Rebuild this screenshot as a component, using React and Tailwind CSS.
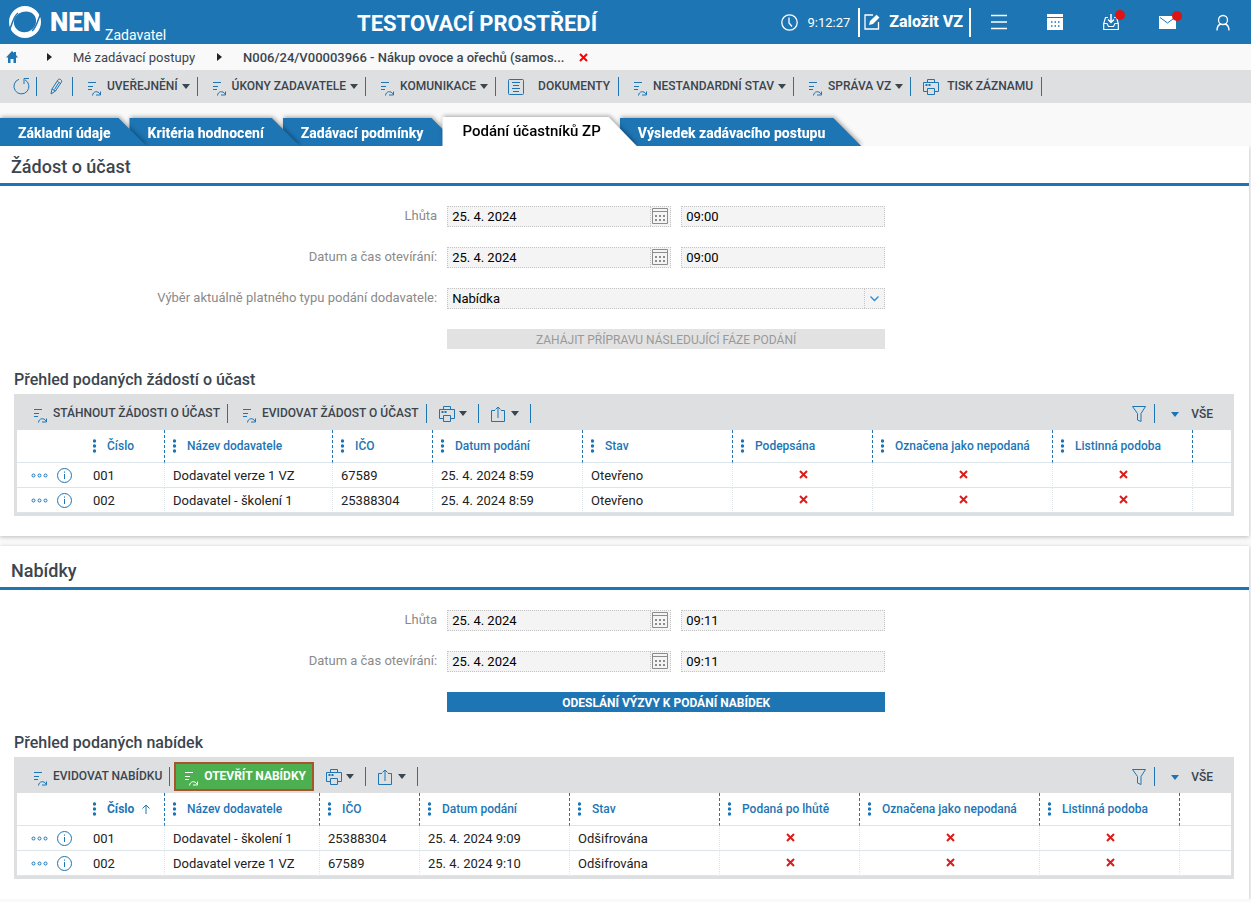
import React from 'react';

const CARET = 'M0 0h8L4 5z';

/* Icons */
const Caret = ({ className = 'fill-[#3b454e]' }) => (
  <svg width="8" height="5" viewBox="0 0 8 5" className={className}>
    <path d={CARET} />
  </svg>
);

const ActionIcon = ({ className = 'stroke-[#1d75b4]' }) => (
  <svg width="14" height="14" viewBox="0 0 14 14" fill="none" className={`mt-1 shrink-0 ${className}`}>
    <path d="M1 .5h8M1 4.500h5M1 7.500h4" />
    <path d="M5.500 13.500c.5-4.500 5.500-5 7.500-1.500M13.500 9.500v3.500H9" />
  </svg>
);

const RefreshIcon = () => (
  <svg width="17" height="17" viewBox="0 0 17 17" fill="none" className="stroke-[#1d75b4]">
    <path d="M6 1.300A7.500 7.500 0 1 0 12 1.800M11 6V.500H16" />
  </svg>
);

const PencilIcon = () => (
  <svg width="13" height="17" viewBox="0 0 13 17" fill="none" className="stroke-[#1d75b4]">
    <path d="M1 16l1-5L8 1.800c1-1.500 4.500 0 3.500 2.200L5.500 13zM2 11l3.500 2M7.500 3.500l3.200 2M8.500 5L4.500 11.500" />
  </svg>
);

const ListIcon = () => (
  <svg width="16" height="16" viewBox="0 0 16 16" fill="none" className="stroke-[#1d75b4]">
    <rect x=".5" y=".5" width="15" height="15" rx="1" />
    <path d="M4 3.500h8M5 6.500h6M4 9.500h8M5 12.500h6" />
  </svg>
);

const PrinterIcon = () => (
  <svg width="16" height="16" viewBox="0 0 16 16" fill="none" className="stroke-[#1d75b4]">
    <path d="M4.500 3.500v-3h7v3M4.500 12.500H.5v-9h15v9h-4" />
    <path d="M4.500 9.500h7v6h-7z" />
    <path d="M2.500 6h2M5.500 6h2" strokeWidth="2" />
  </svg>
);

const ShareIcon = () => (
  <svg width="14" height="16" viewBox="0 0 14 16" fill="none" className="stroke-[#1d75b4]">
    <path d="M4 4.500H.5v11h13v-11H10M7 12V1M4.500 3.500L7 1l2.500 2.500" />
  </svg>
);

const FilterIcon = () => (
  <svg width="14" height="16" viewBox="0 0 14 16" fill="none" className="stroke-[#1d75b4]">
    <path d="M.5.5h13L9 7.500v8L5.500 14V7.500z" />
  </svg>
);

const FieldCalendarIcon = () => (
  <svg width="16" height="16" viewBox="0 0 16 16" fill="none" className="stroke-[#8c8c8c]">
    <path d="M.5.5h15v15H.5zM.5 3.500h15" />
    <path d="M3 8h10M3 12h10" strokeWidth="2" strokeDasharray="2 2" />
  </svg>
);

const InfoIcon = () => (
  <svg width="15" height="15" viewBox="0 0 15 15" fill="none" className="stroke-[#1d75b4]">
    <circle cx="7.500" cy="7.500" r="7" />
    <path d="M7.500 6v5M7.500 3.500v1.200" />
  </svg>
);

const MoreIcon = () => (
  <svg width="17" height="5" viewBox="0 0 17 5" fill="none" className="stroke-[#1d75b4]">
    <circle cx="2.500" cy="2.500" r="1.500" />
    <circle cx="8.500" cy="2.500" r="1.500" />
    <circle cx="14.500" cy="2.500" r="1.500" />
  </svg>
);

const DotsIcon = () => (
  <svg width="4" height="14" viewBox="0 0 4 14" className="shrink-0 fill-[#1d75b4]">
    <circle cx="1.500" cy="2" r="1.700" />
    <circle cx="1.500" cy="7" r="1.700" />
    <circle cx="1.500" cy="12" r="1.700" />
  </svg>
);

const CrossIcon = ({ className = 'stroke-[#dc1c1c]' }) => (
  <svg width="9" height="9" viewBox="0 0 9 9" fill="none" strokeWidth="2" className={className}>
    <path d="M1 1l7 7M8 1L1 8" />
  </svg>
);

/* Top bar */
const TopButton = ({ label, badge, children }) => (
  <button aria-label={label} className="w-14 h-11 flex items-center justify-center">
    <span className="relative">
      {children}
      {badge && <span className="absolute -top-1 -right-[6px] w-[10px] h-[10px] rounded-full bg-[#dc1414]" />}
    </span>
  </button>
);

const Header = () => (
  <header className="h-11 bg-[#1d75b4] text-white flex items-center">
    <a href="#home" className="w-[357px] h-11 pl-[9px] flex items-center">
      <svg width="32" height="32" viewBox="0 0 32 32">
        <path fill="white" fillRule="evenodd" d="M16 0a16 16 0 1 1 0 32a16 16 0 1 1 0-32zM22 6.500C15 3.500 8 7 5.500 13c-1.500 5 0 9 4.500 12 7 3 14 0 16.500-6.500 1.500-5 0-9.500-4.500-12z" />
        <path fill="none" stroke="#1d75b4" strokeWidth="1.500" d="M9 7C4 11 3.500 18 .300 24M23 25C28 21 28.500 14 31.700 8" />
      </svg>
      <span className="ml-[9px] text-[26px] font-black">NEN</span>
      <span className="ml-1 mt-[26px] text-sm">Zadavatel</span>
    </a>
    <h1 className="pt-[2px] text-[22px] font-bold whitespace-nowrap">TESTOVACÍ PROSTŘEDÍ</h1>
    <div className="ml-auto flex items-center">
      <svg width="17" height="17" viewBox="0 0 17 17" fill="none" stroke="white" strokeWidth="1.300">
        <circle cx="8.500" cy="8.500" r="7.700" />
        <path d="M8 3.500v5.500l3 3.500" />
      </svg>
      <span className="ml-[9px] mr-2 pt-px text-[13px]">9:12:27</span>
      <button className="h-[29px] border-x-2 border-white pl-1 pr-[6px] flex items-center gap-2 text-base font-extrabold">
        <svg width="17" height="16" viewBox="0 0 17 16" fill="none" stroke="white" strokeWidth="1.300">
          <path d="M9 1H1v14h13.500V8" />
          <path d="M5 11l1-4L12.500.800l3 2.700L9 10z" fill="white" stroke="none" />
        </svg>
        Založit VZ
      </button>
      <TopButton label="Menu">
        <svg width="16" height="16" viewBox="0 0 16 16" stroke="white" strokeWidth="1.500">
          <path d="M0 1.500h16M0 8h16M0 14.500h16" />
        </svg>
      </TopButton>
      <TopButton label="Kalendář">
        <svg width="16" height="16" viewBox="0 0 16 16">
          <path d="M0 0h16v3H0zM0 4h16v12H0z" fill="white" />
          <path d="M4 8h9M4 12h9" stroke="#1d75b4" strokeWidth="1.500" strokeDasharray="1.500 2" />
        </svg>
      </TopButton>
      <TopButton label="Schránka" badge>
        <svg width="16" height="16" viewBox="0 0 16 16" fill="none" stroke="white" strokeWidth="1.200">
          <path d="M5 3.500H2.500L.700 9.500v6h14.600v-6l-1.800-6H11M.700 9.500H4l1.500 3h5l1.500-3h3.300" />
          <path d="M8 0v8M5 5.500l3 3 3-3" strokeWidth="1.500" />
        </svg>
      </TopButton>
      <TopButton label="Zprávy" badge>
        <svg width="17" height="14" viewBox="0 0 17 14">
          <path d="M0 1h17v13H0z" fill="white" />
          <path d="M1 2.500l7.500 5.500L16 2.500" fill="none" stroke="#1d75b4" />
        </svg>
      </TopButton>
      <TopButton label="Uživatel">
        <svg width="14" height="17" viewBox="0 0 14 17" fill="none" stroke="white" strokeWidth="1.300">
          <circle cx="7" cy="6" r="4.500" />
          <path d="M1 16.500c0-4 2-6 4-6.500M13 16.500c0-4-2-6-4-6.500" />
        </svg>
      </TopButton>
    </div>
  </header>
);

const Breadcrumb = () => (
  <nav className="h-[26px] pl-[6px] flex items-center text-[13px] text-[#3b454e]">
    <a href="#home" aria-label="Domů">
      <svg width="12" height="12" viewBox="0 0 12 12" className="fill-[#1d75b4]">
        <path d="M6 0l2 2V1h2v3l2 2.500h-2V12H7.500V8h-3v4H2V6.500H0z" />
      </svg>
    </a>
    <svg width="5" height="8" viewBox="0 0 5 8" className="ml-[29px] mr-[21px] fill-[#222]">
      <path d="M0 0l5 4-5 4z" />
    </svg>
    <a href="#postupy" className="pt-[2px]">Mé zadávací postupy</a>
    <svg width="5" height="8" viewBox="0 0 5 8" className="ml-[22px] mr-[21px] fill-[#222]">
      <path d="M0 0l5 4-5 4z" />
    </svg>
    <a href="#zaznam" className="pt-[2px] font-medium">N006/24/V00003966 - Nákup ovoce a ořechů (samos...</a>
    <button aria-label="Zavřít" className="ml-[15px]">
      <CrossIcon className="stroke-[#f00]" />
    </button>
  </nav>
);

/* Toolbars */
const Separator = () => <span className="w-px h-[19px] shrink-0 bg-[#1d75b4]" />;

const ToolButton = ({ label, menu }) => (
  <>
    <button className="pl-[14px] pr-[7px] flex items-center">
      <ActionIcon />
      <span className="ml-[6px] pb-[2px]">{label}</span>
      {menu && <span className="ml-1"><Caret /></span>}
    </button>
    <Separator />
  </>
);

const Toolbar = () => (
  <div className="h-[33px] bg-[#dedfe1] flex items-center text-xs font-medium text-[#3b454e] whitespace-nowrap">
    <button aria-label="Obnovit" className="pl-[13px] pr-[6px]"><RefreshIcon /></button>
    <Separator />
    <button aria-label="Upravit" className="pl-[13px] pr-[9px]"><PencilIcon /></button>
    <Separator />
    <ToolButton label="UVEŘEJNĚNÍ" menu />
    <ToolButton label="ÚKONY ZADAVATELE" menu />
    <ToolButton label="KOMUNIKACE" menu />
    <button className="pl-3 pr-2 flex items-center gap-[14px]">
      <ListIcon />
      <span className="pb-[2px]">DOKUMENTY</span>
    </button>
    <Separator />
    <ToolButton label="NESTANDARDNÍ STAV" menu />
    <ToolButton label="SPRÁVA VZ" menu />
    <button className="pl-3 pr-2 flex items-center gap-2">
      <PrinterIcon />
      <span className="pb-[2px]">TISK ZÁZNAMU</span>
    </button>
    <Separator />
  </div>
);

const tabs = [
  { name: 'Základní údaje', layer: 'z-40' },
  { name: 'Kritéria hodnocení', layer: 'z-30 -ml-[17px]' },
  { name: 'Zadávací podmínky', layer: 'z-20 -ml-[17px]' },
  { name: 'Podání účastníků ZP', layer: 'z-50 -ml-[17px]', active: true },
  { name: 'Výsledek zadávacího postupu', layer: 'z-10 -ml-[17px]' },
];

const Tabs = () => (
  <div role="tablist" className="h-[43px] flex items-end overflow-hidden">
    {tabs.map((tab) => (
      <div key={tab.name} className={`relative drop-shadow-[1px_-1px_2px_rgba(0,0,0,0.35)] ${tab.layer}`}>
        <button
          role="tab"
          aria-selected={!!tab.active}
          className={`pr-9 whitespace-nowrap [clip-path:polygon(0_0,calc(100%-28px)_0,100%_100%,0_100%)] ${
            tab.active
              ? 'block h-[29px] pl-5 bg-white text-black text-[15px] font-medium'
              : 'block h-7 pl-[18px] pt-[2px] bg-[#1d75b4] text-white text-sm font-extrabold'
          }`}
        >
          {tab.name}
        </button>
      </div>
    ))}
  </div>
);

/* Form */
const Row = ({ label, id, children }) => (
  <div className="flex">
    <label htmlFor={id} className="w-[35%] mr-[10px] pt-[2px] text-right text-[13px] leading-4 text-[#8a8a8a]">{label}</label>
    <div className="w-[438px] flex gap-[10px]">{children}</div>
  </div>
);

const DateRow = ({ label, id, date, time }) => (
  <Row label={label} id={id}>
    <div className="w-[224px] h-[21px] flex items-center border border-dotted border-[#c4c4c4] bg-[#f4f4f4]">
      <input id={id} readOnly defaultValue={date} className="flex-1 min-w-0 h-[19px] px-1 text-[13px] text-black" />
      <button aria-label="Vybrat datum" className="h-[19px] pl-px pr-[2px] pb-px flex items-center border-l border-dotted border-[#c4c4c4]">
        <FieldCalendarIcon />
      </button>
    </div>
    <input
      aria-label={`${label} čas`}
      readOnly
      defaultValue={time}
      className="flex-1 min-w-0 h-[21px] px-1 border border-dotted border-[#c4c4c4] bg-[#f4f4f4] text-[13px] text-black"
    />
  </Row>
);

const Section = ({ title, className, children }) => (
  <section className={`mr-[2px] bg-white shadow-[0_1px_4px_rgba(0,0,0,0.25)] ${className}`}>
    <h2 className="h-[37px] pt-[5px] pl-[11px] text-lg leading-8 font-medium text-[#3b454e]">{title}</h2>
    <div className="h-[3px] bg-[#1d75b4]" />
    {children}
  </section>
);

/* Grid */
const Cell = ({ children }) => (
  <td className="border-r border-r-[#dce5ea] [border-right-style:dotted] px-2">{children}</td>
);

const DataGrid = ({ title, actions, columns, rows, sorted }) => (
  <div className="px-[14px] pr-[15px]">
    <h3 className="pt-[21px] pb-1 text-base leading-5 font-medium text-[#3b454e]">{title}</h3>
    <div className="border-x-3 border-b-3 border-[#dedfe1]">
      <div className="h-9 pt-[3px] pl-[2px] pr-[18px] bg-[#dedfe1] flex items-center text-xs font-medium text-[#3b454e] whitespace-nowrap">
        {actions}
        <button aria-label="Tisk" className="pl-3 pr-[11px] flex items-center gap-1"><PrinterIcon /><Caret /></button>
        <Separator />
        <button aria-label="Export" className="pl-3 pr-[11px] flex items-center gap-[6px]"><ShareIcon /><Caret /></button>
        <Separator />
        <button aria-label="Filtr" className="ml-auto mr-2"><FilterIcon /></button>
        <Separator />
        <button className="pt-px ml-4 flex items-center gap-3">
          <Caret className="fill-[#1d75b4]" />
          VŠE
        </button>
      </div>
      <table className="w-full table-fixed border-separate border-spacing-0">
        <colgroup>
          <col className="w-[68px]" />
          {columns.map((column) => <col key={column.name} className={column.width} />)}
          <col />
        </colgroup>
        <thead>
          <tr className="h-[33px] text-xs text-[#1d75b4] [&>th]:border-b [&>th]:border-b-[#dce5ea]">
            <th aria-label="Akce" />
            {columns.map((column, i) => (
              <th key={column.name} className="p-0 border-r border-r-[#1d75b4] [border-right-style:dashed]">
                <span className={`pl-2 flex items-center gap-[10px] whitespace-nowrap ${sorted && i === 0 ? 'font-bold' : 'font-medium'}`}>
                  <DotsIcon />
                  {column.name}
                  {sorted && i === 0 && (
                    <svg width="8" height="10" viewBox="0 0 8 10" fill="none" className="-ml-[2px] stroke-[#1d75b4]">
                      <path d="M4 10V1M.5 4.500L4 1l3.500 3.500" />
                    </svg>
                  )}
                </span>
              </th>
            ))}
            <th aria-label="Konec" />
          </tr>
        </thead>
        <tbody>
          {rows.map((row) => (
            <tr key={row[0]} className="h-[25px] text-[13px] leading-5 text-[#222] [&>td]:border-b [&>td]:border-b-[#dce5ea] [&>td]:py-0">
              <td>
                <span className="pl-[14px] flex items-center gap-[9px]">
                  <button aria-label="Další akce"><MoreIcon /></button>
                  <button aria-label="Detail"><InfoIcon /></button>
                </span>
              </td>
              {row.map((value) => (
                <Cell key={value}>
                  <span className="block pt-[2px]">{value}</span>
                </Cell>
              ))}
              {[0, 1, 2].map((i) => (
                <Cell key={i}>
                  <span role="img" aria-label="Ne" className="pl-px pb-[2px] flex justify-center"><CrossIcon /></span>
                </Cell>
              ))}
              <td />
            </tr>
          ))}
        </tbody>
      </table>
    </div>
  </div>
);

const requestColumns = [
  { name: 'Číslo', width: 'w-[80px]' },
  { name: 'Název dodavatele', width: 'w-[168px]' },
  { name: 'IČO', width: 'w-[100px]' },
  { name: 'Datum podání', width: 'w-[150px]' },
  { name: 'Stav', width: 'w-[150px]' },
  { name: 'Podepsána', width: 'w-[140px]' },
  { name: 'Označena jako nepodaná', width: 'w-[180px]' },
  { name: 'Listinná podoba', width: 'w-[140px]' },
];

const offerColumns = [
  { name: 'Číslo', width: 'w-[80px]' },
  { name: 'Název dodavatele', width: 'w-[155px]' },
  { name: 'IČO', width: 'w-[100px]' },
  { name: 'Datum podání', width: 'w-[150px]' },
  { name: 'Stav', width: 'w-[150px]' },
  { name: 'Podaná po lhůtě', width: 'w-[140px]' },
  { name: 'Označena jako nepodaná', width: 'w-[180px]' },
  { name: 'Listinná podoba', width: 'w-[140px]' },
];

const requests = [
  ['001', 'Dodavatel verze 1 VZ', '67589', '25. 4. 2024 8:59', 'Otevřeno'],
  ['002', 'Dodavatel - školení 1', '25388304', '25. 4. 2024 8:59', 'Otevřeno'],
];

const offers = [
  ['001', 'Dodavatel - školení 1', '25388304', '25. 4. 2024 9:09', 'Odšifrována'],
  ['002', 'Dodavatel verze 1 VZ', '67589', '25. 4. 2024 9:10', 'Odšifrována'],
];

const App = () => (
  <div className="min-h-screen bg-[#f9f9f9] font-[Roboto,sans-serif]">
    <Header />
    <Breadcrumb />
    <Toolbar />
    <Tabs />
    <main className="overflow-hidden">
      <Section title="Žádost o účast" className="pb-5">
        <div className="pt-5 flex flex-col gap-5">
          <DateRow label="Lhůta" id="request-deadline" date="25. 4. 2024" time="09:00" />
          <DateRow label="Datum a čas otevírání:" id="request-opening" date="25. 4. 2024" time="09:00" />
          <Row label="Výběr aktuálně platného typu podání dodavatele:" id="submission-type">
            <div className="relative flex-1 h-[21px] border border-dotted border-[#c4c4c4] bg-[#f4f4f4]">
              <select id="submission-type" className="block w-full h-[19px] px-1 appearance-none text-[13px] leading-[19px] text-black">
                <option>Nabídka</option>
              </select>
              <span className="absolute right-0 top-0 w-5 h-[19px] flex items-center justify-center border-l border-dotted border-[#c4c4c4] pointer-events-none">
                <svg width="9" height="6" viewBox="0 0 9 6" fill="none" strokeWidth="1.300" className="stroke-[#2f8ad0]">
                  <path d="M.5.5l4 4 4-4" />
                </svg>
              </span>
            </div>
          </Row>
          <Row>
            <button disabled className="flex-1 h-5 pt-px bg-[#e2e2e2] text-xs text-[#999]">
              ZAHÁJIT PŘÍPRAVU NÁSLEDUJÍCÍ FÁZE PODÁNÍ
            </button>
          </Row>
        </div>
        <DataGrid
          title="Přehled podaných žádostí o účast"
          columns={requestColumns}
          rows={requests}
          actions={
            <>
              <ToolButton label="STÁHNOUT ŽÁDOSTI O ÚČAST" />
              <ToolButton label="EVIDOVAT ŽÁDOST O ÚČAST" />
            </>
          }
        />
      </Section>

      <Section title="Nabídky" className="mt-[10px] pt-1 pb-5">
        <div className="pt-5 flex flex-col gap-5">
          <DateRow label="Lhůta" id="offer-deadline" date="25. 4. 2024" time="09:11" />
          <DateRow label="Datum a čas otevírání:" id="offer-opening" date="25. 4. 2024" time="09:11" />
          <Row>
            <button className="flex-1 h-5 pt-px bg-[#1d75b4] text-xs font-bold text-white">
              ODESLÁNÍ VÝZVY K PODÁNÍ NABÍDEK
            </button>
          </Row>
        </div>
        <DataGrid
          title="Přehled podaných nabídek"
          columns={offerColumns}
          rows={offers}
          sorted
          actions={
            <>
              <ToolButton label="EVIDOVAT NABÍDKU" />
              <button className="ml-1 h-[29px] pl-2 pr-[6px] flex items-center gap-[6px] border-2 border-[#a9552c] bg-[#4caf50] font-bold text-white">
                <ActionIcon className="stroke-white" />
                <span className="pb-[2px]">OTEVŘÍT NABÍDKY</span>
              </button>
            </>
          }
        />
      </Section>
    </main>
  </div>
);

export default App;
